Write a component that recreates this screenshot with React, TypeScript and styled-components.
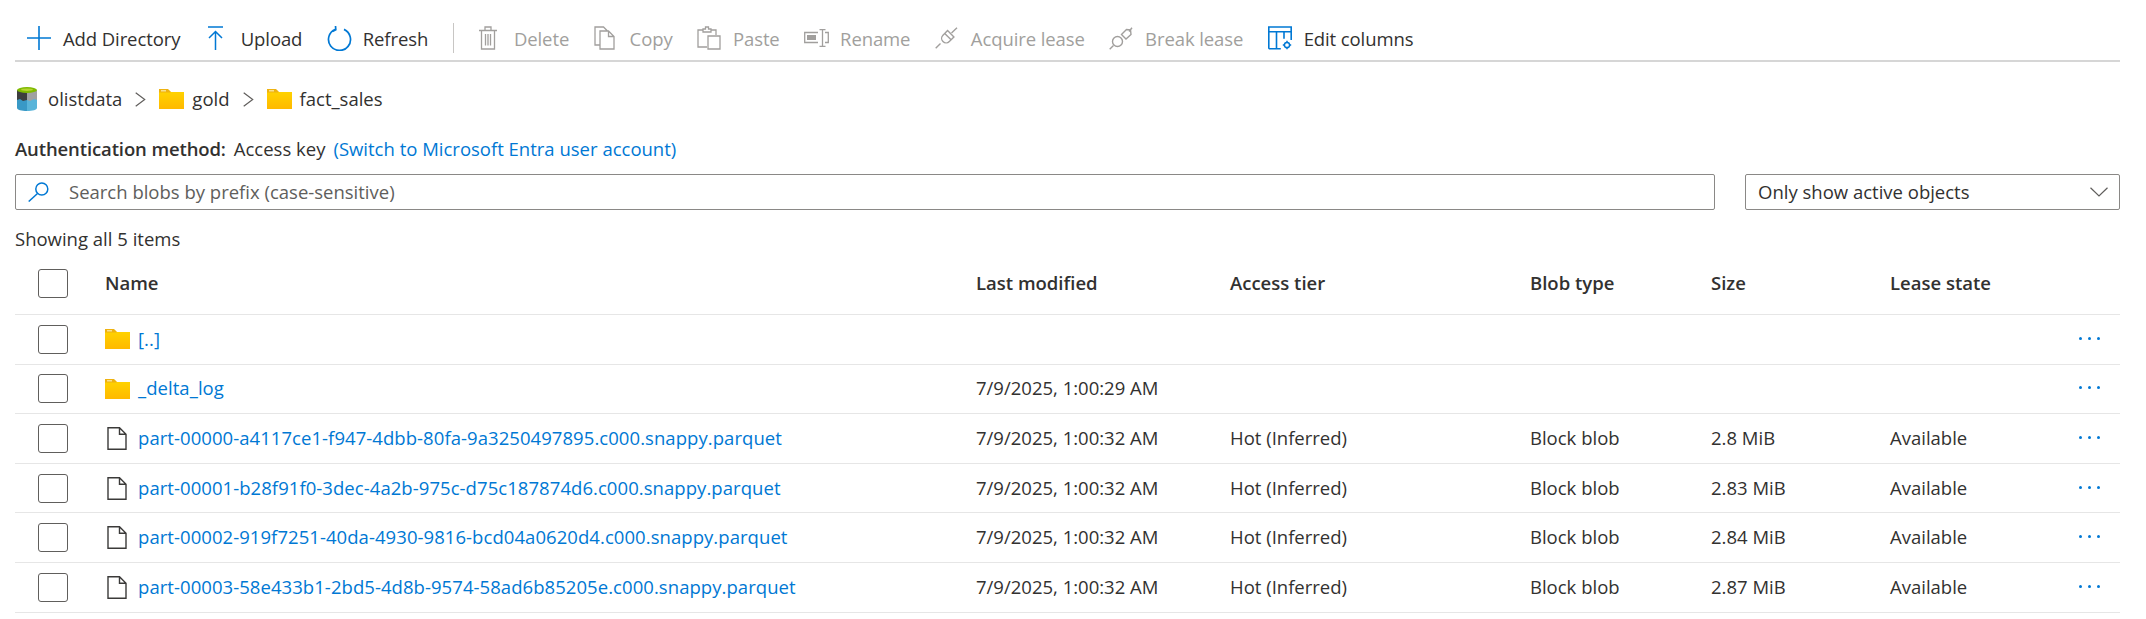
import React from "react";
import styled, { createGlobalStyle } from "styled-components";

const GlobalStyle = createGlobalStyle`
  html, body {
    margin: 0;
    background: #fff;
  }
  body {
    font-family: "Open Sans", "Noto Sans", "Liberation Sans", sans-serif;
    font-size: 18.5px;
    color: #323130;
  }
`;

const Page = styled.div`
  width: 2146px;
  height: 619px;
  box-sizing: border-box;
  padding: 0 26px 0 15px;
  overflow: hidden;
`;

const Toolbar = styled.div`
  height: 62px;
  box-sizing: border-box;
  border-bottom: 2px solid #d6d6d6;
  padding: 16px 0 0 12px;
  display: flex;
  align-items: center;
  gap: 24.4px;
  letter-spacing: -0.1px;
`;

const ToolButton = styled.div<{ $disabled?: boolean }>`
  display: flex;
  align-items: center;
  color: ${(p) => (p.$disabled ? "#a19f9d" : "#323130")};
  white-space: nowrap;
`;

const IconSlot = styled.span`
  width: 36px;
  flex: none;
  display: flex;
  align-items: center;
`;

const Separator = styled.div`
  width: 1px;
  height: 30px;
  background: #c8c6c4;
`;

const Crumbs = styled.div`
  height: 74px;
  display: flex;
  align-items: center;
  gap: 13px;
  padding-left: 2px;
`;

const CrumbItem = styled.div`
  display: flex;
  align-items: center;
  gap: 8px;
`;

const Label = styled.span`
  padding-bottom: 2px;
  white-space: nowrap;
`;

const AuthRow = styled.div`
  height: 26px;
  display: flex;
  align-items: center;
  gap: 8px;
`;

const AuthLabel = styled(Label)`
  font-weight: 600;
  letter-spacing: -0.12px;
`;

const Link = styled(Label)`
  color: #0078d4;
`;

const FilterRow = styled.div`
  margin-top: 12px;
  display: flex;
  gap: 30px;
`;

const SearchBox = styled.div`
  width: 1700px;
  height: 36px;
  box-sizing: border-box;
  border: 1px solid #8a8886;
  border-radius: 2px;
  display: flex;
  align-items: center;
  padding-left: 12px;
  gap: 20px;
  color: #605e5c;
`;

const SelectBox = styled.div`
  flex: 1;
  height: 36px;
  box-sizing: border-box;
  border: 1px solid #8a8886;
  border-radius: 2px;
  display: flex;
  align-items: center;
  justify-content: space-between;
  padding: 0 11px 0 12px;
`;

const ItemCount = styled.div`
  margin-top: 15px;
  height: 27px;
  line-height: 27px;
`;

const Row = styled.div<{ $header?: boolean }>`
  display: grid;
  grid-template-columns: 90px 871px 254px 300px 181px 179px 160px 1fr;
  align-items: center;
  height: ${(p) => (p.$header ? "63px" : "49.6px")};
  box-sizing: border-box;
  border-bottom: 1px solid #e6e6e6;
  font-weight: ${(p) => (p.$header ? 600 : 400)};
`;

const Cell = styled.div`
  padding-bottom: 2px;
  white-space: nowrap;
`;

const CheckCell = styled.div`
  padding-left: 23px;
  display: flex;
`;

const Checkbox = styled.div`
  width: 30px;
  height: 29px;
  box-sizing: border-box;
  border: 1px solid #605e5c;
  border-radius: 3px;
`;

const NameCell = styled.div`
  display: flex;
  align-items: center;
  gap: 8px;
  letter-spacing: 0.06px;
`;

const ActionCell = styled.div`
  display: flex;
  justify-content: flex-end;
  padding: 0 20px 2px 0;
  gap: 6px;
`;

const Dot = styled.span`
  width: 3px;
  height: 3px;
  border-radius: 50%;
  background: #0078d4;
`;

const Svg = styled.svg`
  flex: none;
  display: block;
`;

const FileSvg = styled(Svg)`
  margin: 0 3px 0 2px;
`;

const StorageSvg = styled(Svg)`
  margin-right: 3px;
`;

const BLUE = "#0078d4";
const GREY = "#a19f9d";

const PlusIcon = () => (
  <Svg width="24" height="24" viewBox="0 0 24 24" fill="none" stroke={BLUE} strokeWidth="1.6">
    <path d="M12 0v24M0 12h24" />
  </Svg>
);

const UploadIcon = () => (
  <Svg width="20" height="24" viewBox="0 0 20 24" fill="none" stroke={BLUE} strokeWidth="1.5">
    <path d="M3 1h15M10.500 24V5.500M4 12l6.500-6.500L17 12" />
  </Svg>
);

const RefreshIcon = () => (
  <Svg width="26" height="25" viewBox="0 0 26 25" fill="none" stroke={BLUE} strokeWidth="1.7">
    <path d="M17 3.400a11 11 0 1 1-8.500-.2M8.500 0l.3 3.800-3.300 1.700" />
  </Svg>
);

const DeleteIcon = () => (
  <Svg width="20" height="24" viewBox="0 0 20 24" fill="none" stroke={GREY} strokeWidth="1.3">
    <path d="M1 4.500h18M7 4.500V1h6v3.500M3.500 4.500V23h13V4.500M7.500 8v11.500M10 8v11.500M12.500 8v11.500" />
  </Svg>
);

const CopyIcon = () => (
  <Svg width="21" height="24" viewBox="0 0 21 24" fill="none" stroke={GREY} strokeWidth="1.3">
    <path d="M6 19H1V1h8.500l4 4M6 5h8.500l5.500 5.500V23H6zM14.500 5v5.500H20" />
  </Svg>
);

const PasteIcon = () => (
  <Svg width="24" height="24" viewBox="0 0 24 24" fill="none" stroke={GREY} strokeWidth="1.3">
    <path d="M10 21H1V4h5M14 4h5v5M6 6V3h2.500V1h3V3H14v3zM11 10h12v13H11z" />
  </Svg>
);

const RenameIcon = () => (
  <Svg width="25" height="18" viewBox="0 0 25 18" fill="none" stroke={GREY} strokeWidth="1.3">
    <path d="M14 3.500H.7v10H14M15.500 .7h6M15.500 17.300h6M18.500 .7v16.600M21 3.500h3.300v10H21" />
    <rect x="3" y="6" width="9" height="5" fill={GREY} stroke="none" />
  </Svg>
);

const AcquireIcon = () => (
  <Svg width="23" height="22" viewBox="0 0 23 22" fill="none" stroke={GREY} strokeWidth="1.4">
    <path d="M.7 21.300 5.500 16.500M16.500 6 22 .7" />
    <g transform="rotate(45 11.500 11)">
      <path d="M7 5h9v6.500a4.500 4.500 0 0 1-9 0z" transform="rotate(0)" />
      <path d="M7 9h9" />
    </g>
  </Svg>
);

const BreakIcon = () => (
  <Svg width="24" height="23" viewBox="0 0 24 23" fill="none" stroke={GREY} strokeWidth="1.4">
    <path d="M.7 22.300 4.500 18.500M20 4.500l3-3.800" />
    <circle cx="8.500" cy="14.500" r="5" />
    <path d="M12.500 7.500 17.500 2.500l4 .5.500 4.500-5 4.500z" />
  </Svg>
);

const ColumnsIcon = () => (
  <Svg width="24" height="24" viewBox="0 0 24 24" fill="none" stroke={BLUE} strokeWidth="1.6">
    <path d="M.8 22.800V1h22.400v13M.8 5.800h22.400M8.500 5.800v17M.8 22.800h12M16 5.800v7" />
    <circle cx="19" cy="19" r="2.600" strokeWidth="1.500" />
    <path d="M19 14.800v1.700M19 21.500v1.700M14.800 19h1.700M21.500 19h1.700" strokeWidth="1.500" />
  </Svg>
);

const StorageIcon = () => (
  <StorageSvg width="20" height="24" viewBox="0 0 20 24">
    <path d="M0 3v18c0 1.700 4.500 3 10 3V3z" fill="#3999c6" />
    <path d="M10 3v21c5.500 0 10-1.300 10-3V3z" fill="#59b4d9" />
    <path d="M0 3v10l3-1 3 2 4-1V3z" fill="#3e3e3e" />
    <path d="M10 3v10l3 1 4-2 3 1V3z" fill="#a0a1a2" />
    <ellipse cx="10" cy="3" rx="10" ry="3" fill="#7fba00" />
    <ellipse cx="10" cy="2.700" rx="6" ry="1.300" fill="#b8d432" />
  </StorageSvg>
);

const FolderIcon = () => (
  <Svg width="25" height="20" viewBox="0 0 25 20">
    <defs>
      <linearGradient id="folderFill" x1="0" y1="0" x2="0" y2="1">
        <stop offset="0" stopColor="#ffd400" />
        <stop offset="1" stopColor="#ffb900" />
      </linearGradient>
    </defs>
    <path d="M0 1.500h10l2 1.500h13v17H0z" fill="url(#folderFill)" />
    <path d="M0 0h9l2.500 2.500v1H0z" fill="#eeb211" />
    <rect x="2" y="1" width="5" height="1.500" fill="#f9e08a" />
  </Svg>
);

const FileIcon = () => (
  <FileSvg width="20" height="23" viewBox="0 0 20 23" fill="none" stroke="#3b3a39" strokeWidth="1.400">
    <path d="M1 .7h11.500L19 7.200v15H1zM12.500 .7v6.500H19" />
  </FileSvg>
);

const Chevron = () => (
  <Svg width="11" height="15" viewBox="0 0 11 15" fill="none" stroke="#605e5c" strokeWidth="1.200">
    <path d="M.7 .7l9 6.800-9 6.800" />
  </Svg>
);

const SearchIcon = () => (
  <Svg width="21" height="20" viewBox="0 0 21 20" fill="none" stroke={BLUE} strokeWidth="1.500">
    <circle cx="13.800" cy="7" r="6" />
    <path d="M9.500 11.500.7 19.500" />
  </Svg>
);

const CaretDown = () => (
  <Svg width="18" height="10" viewBox="0 0 18 10" fill="none" stroke="#605e5c" strokeWidth="1.200">
    <path d="M.5 .7 9 9l8.500-8.300" />
  </Svg>
);

const MoreDots = () => (
  <ActionCell>
    <Dot />
    <Dot />
    <Dot />
  </ActionCell>
);

const tools = [
  { label: "Add Directory", icon: <PlusIcon /> },
  { label: "Upload", icon: <UploadIcon /> },
  { label: "Refresh", icon: <RefreshIcon /> },
];

const disabledTools = [
  { label: "Delete", icon: <DeleteIcon /> },
  { label: "Copy", icon: <CopyIcon /> },
  { label: "Paste", icon: <PasteIcon /> },
  { label: "Rename", icon: <RenameIcon /> },
  { label: "Acquire lease", icon: <AcquireIcon /> },
  { label: "Break lease", icon: <BreakIcon /> },
];

const files = [
  { name: "part-00000-a4117ce1-f947-4dbb-80fa-9a3250497895.c000.snappy.parquet", size: "2.8 MiB" },
  { name: "part-00001-b28f91f0-3dec-4a2b-975c-d75c187874d6.c000.snappy.parquet", size: "2.83 MiB" },
  { name: "part-00002-919f7251-40da-4930-9816-bcd04a0620d4.c000.snappy.parquet", size: "2.84 MiB" },
  { name: "part-00003-58e433b1-2bd5-4d8b-9574-58ad6b85205e.c000.snappy.parquet", size: "2.87 MiB" },
];

export default function App() {
  return (
    <Page>
      <GlobalStyle />
      <Toolbar>
        {tools.map((t) => (
          <ToolButton key={t.label}>
            <IconSlot>{t.icon}</IconSlot>
            {t.label}
          </ToolButton>
        ))}
        <Separator />
        {disabledTools.map((t) => (
          <ToolButton key={t.label} $disabled>
            <IconSlot>{t.icon}</IconSlot>
            {t.label}
          </ToolButton>
        ))}
        <ToolButton>
          <IconSlot>
            <ColumnsIcon />
          </IconSlot>
          Edit columns
        </ToolButton>
      </Toolbar>

      <Crumbs>
        <CrumbItem>
          <StorageIcon />
          <Label>olistdata</Label>
        </CrumbItem>
        <Chevron />
        <CrumbItem>
          <FolderIcon />
          <Label>gold</Label>
        </CrumbItem>
        <Chevron />
        <CrumbItem>
          <FolderIcon />
          <Label>fact_sales</Label>
        </CrumbItem>
      </Crumbs>

      <AuthRow>
        <AuthLabel>Authentication method:</AuthLabel>
        <Label>Access key</Label>
        <Link>(Switch to Microsoft Entra user account)</Link>
      </AuthRow>

      <FilterRow>
        <SearchBox>
          <SearchIcon />
          <Label>Search blobs by prefix (case-sensitive)</Label>
        </SearchBox>
        <SelectBox>
          <Label>Only show active objects</Label>
          <CaretDown />
        </SelectBox>
      </FilterRow>

      <ItemCount>Showing all 5 items</ItemCount>

      <Row $header>
        <CheckCell>
          <Checkbox />
        </CheckCell>
        <Cell>Name</Cell>
        <Cell>Last modified</Cell>
        <Cell>Access tier</Cell>
        <Cell>Blob type</Cell>
        <Cell>Size</Cell>
        <Cell>Lease state</Cell>
        <div />
      </Row>

      <Row>
        <CheckCell>
          <Checkbox />
        </CheckCell>
        <NameCell>
          <FolderIcon />
          <Link>[..]</Link>
        </NameCell>
        <div />
        <div />
        <div />
        <div />
        <div />
        <MoreDots />
      </Row>

      <Row>
        <CheckCell>
          <Checkbox />
        </CheckCell>
        <NameCell>
          <FolderIcon />
          <Link>_delta_log</Link>
        </NameCell>
        <Cell>7/9/2025, 1:00:29 AM</Cell>
        <div />
        <div />
        <div />
        <div />
        <MoreDots />
      </Row>

      {files.map((f) => (
        <Row key={f.name}>
          <CheckCell>
            <Checkbox />
          </CheckCell>
          <NameCell>
            <FileIcon />
            <Link>{f.name}</Link>
          </NameCell>
          <Cell>7/9/2025, 1:00:32 AM</Cell>
          <Cell>Hot (Inferred)</Cell>
          <Cell>Block blob</Cell>
          <Cell>{f.size}</Cell>
          <Cell>Available</Cell>
          <MoreDots />
        </Row>
      ))}
    </Page>
  );
}
